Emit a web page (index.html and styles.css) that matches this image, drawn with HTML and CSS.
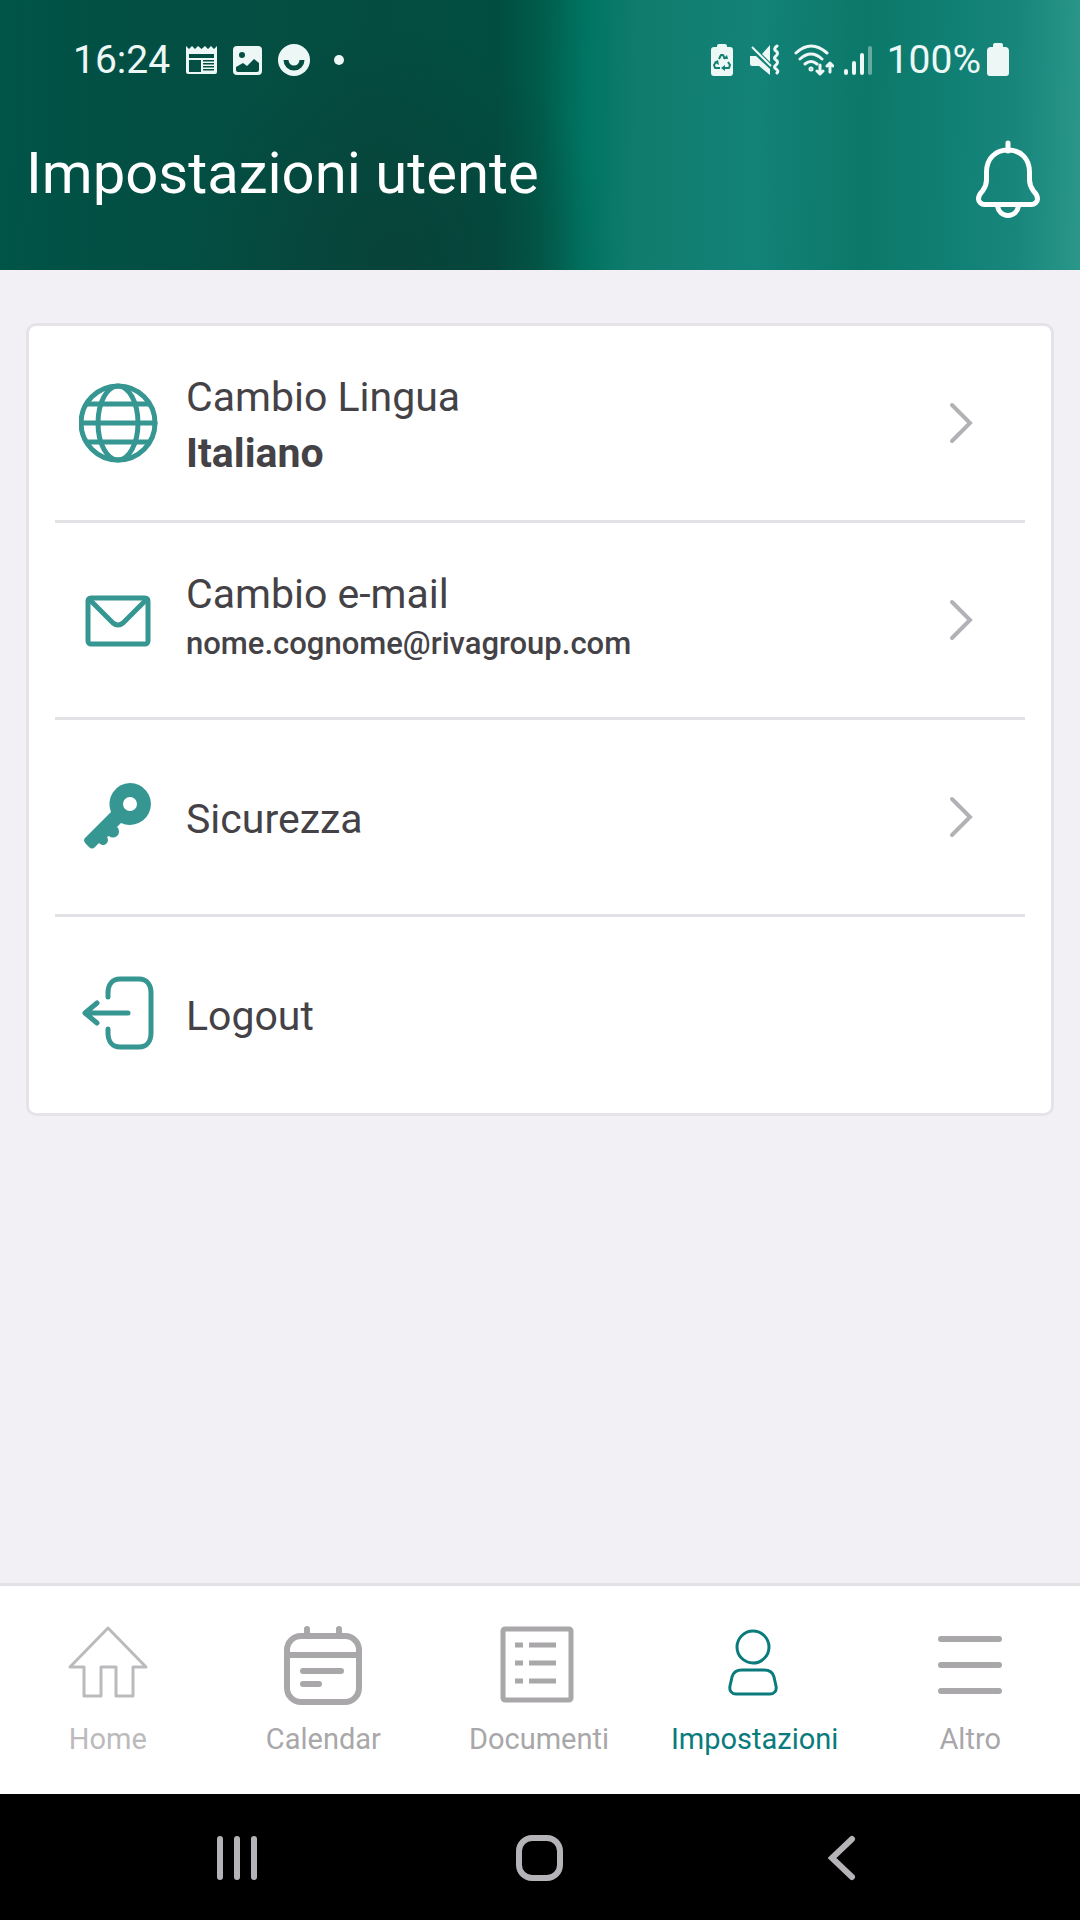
FILE: index.html
```html
<!DOCTYPE html>
<html lang="it">
<head>
    <meta charset="UTF-8">
    <meta name="viewport" content="width=device-width, initial-scale=1.0">
    <title>Impostazioni utente</title>
    <link rel="stylesheet" href="styles.css">
</head>
<body>
    <header class="header">
        <div class="status-bar">
            <div class="status-left">
                <span>16:24</span>
                <!-- news -->
                <svg width="31" height="32" viewBox="0 0 31 32" fill="currentColor">
                    <path fill-rule="evenodd" d="M0 2l3 3 3-3 3 3 3-3 3.500 3 3.500-3 3 3 3-3 3 3 3-3v26a2 2 0 0 1-2 2H2a2 2 0 0 1-2-2zM3 10v4h25v-4zM3 16v12h12V16zM17 16v1.500h11V16zM17 19v1.500h11V19zM17 22v1.500h11V22zM17 25v1.500h11V25z"/>
                </svg>
                <!-- gallery -->
                <svg width="29" height="32" viewBox="0 0 29 32" fill="currentColor">
                    <path fill-rule="evenodd" d="M4 2h21a4 4 0 0 1 4 4v21a4 4 0 0 1-4 4H4a4 4 0 0 1-4-4V6a4 4 0 0 1 4-4zM9 8a3 3 0 1 0 0 6 3 3 0 0 0 0-6zM3 23v3a2 2 0 0 0 2 2h19a2 2 0 0 0 2-2v-7l-5-4-7 7-4-3z"/>
                </svg>
                <!-- smile -->
                <svg width="33" height="32" viewBox="0 0 33 32">
                    <circle cx="16" cy="16" r="16" fill="currentColor"/>
                    <path d="M8 16a8 8 0 0 0 16 0" fill="none" stroke="#044d41" stroke-width="5"/>
                </svg>
                <svg width="24" height="32" viewBox="0 0 24 32"><circle cx="12" cy="16" r="5" fill="currentColor"/></svg>
            </div>
            <div class="status-right">
                <!-- power saving -->
                <svg width="29" height="32" viewBox="0 0 29 32">
                    <path d="M6 3V2a2 2 0 0 1 2-2h6a2 2 0 0 1 2 2v1h3a3 3 0 0 1 3 3v23a3 3 0 0 1-3 3H3a3 3 0 0 1-3-3V6a3 3 0 0 1 3-3z" fill="currentColor"/>
                    <path d="M8 15l2-4h2l2 4M17 18l2 3-1 3h-5M9 24H4l-1-3 2-3" fill="none" stroke="#12806f" stroke-width="2" stroke-linejoin="round"/>
                    <path d="M12 15h5l-1-4zM14 21v6l-4-3zM3 18l4-2 1 5z" fill="#12806f"/>
                </svg>
                <!-- muted, vibrate -->
                <svg width="34" height="32" viewBox="0 0 34 32">
                    <path d="M0 12h6l14 13v6L9 22H2a2 2 0 0 1-2-2zM20 1v17l-8-8z" fill="currentColor"/>
                    <path d="M2 3l19 19" stroke="currentColor" stroke-width="2"/>
                    <path d="M27 2q-4 3-1 5t0 5q-3 2 0 4t0 5q-3 2 0 4t1 4" fill="none" stroke="currentColor" stroke-width="3" stroke-linecap="round" stroke-linejoin="round"/>
                </svg>
                <!-- wifi -->
                <svg width="40" height="32" viewBox="0 0 40 32" fill="none" stroke="currentColor" stroke-width="3" stroke-linecap="round" stroke-linejoin="round">
                    <path d="M2 9q15-14 31 0M6 15q11-10 22 0M11 20q6-5 12 0"/>
                    <circle cx="17" cy="25" r="1"/>
                    <path d="M26 21v9m-3-3l3 3 3-3M36 28v-9m-3 3l3-3 3 3"/>
                </svg>
                <!-- signal -->
                <svg width="33" height="32" viewBox="0 0 33 32" stroke="currentColor" stroke-width="4" stroke-linecap="round">
                    <path d="M2 27v2M10 19v10M18 11v18"/>
                    <path d="M26 4v25" opacity="0.400"/>
                </svg>
                <div class="battery">
                    <span>100%</span>
                    <svg width="22" height="34" viewBox="0 0 22 34" fill="currentColor">
                        <path d="M6 4V2a2 2 0 0 1 2-2h6a2 2 0 0 1 2 2v2h2a4 4 0 0 1 4 4v22a3 3 0 0 1-3 3H3a3 3 0 0 1-3-3V8a4 4 0 0 1 4-4z"/>
                    </svg>
                </div>
            </div>
        </div>
        <div class="title-bar">
            <h1>Impostazioni utente</h1>
            <button type="button" class="bell" aria-label="Notifiche">
                <svg width="64" height="78" viewBox="0 0 64 78" fill="none" stroke="currentColor" stroke-width="5" stroke-linecap="round" stroke-linejoin="round">
                    <path d="M32 3v8M32 10c-13 0-21.500 9-21.500 22v8c0 5-1 7-4 11-3 3-4 5-4 8 0 3 3 5.500 6 5.500h47c3 0 6-2.500 6-5.500 0-3-1-5-4-8-3-4-4-6-4-11v-8C53.500 19 45 10 32 10z"/>
                    <path d="M21.500 66c1 6 5 9.500 10.500 9.500S41.500 72 42.500 66"/>
                </svg>
            </button>
        </div>
    </header>

    <main class="content">
        <ul class="settings">
            <li>
                <a href="#lingua" class="setting">
                    <svg class="setting-icon" viewBox="0 0 80 80">
                        <circle cx="39" cy="40" r="37"/>
                        <ellipse cx="39" cy="40" rx="20" ry="37"/>
                        <path d="M8 21h62M2 40h74M8 59h62"/>
                    </svg>
                    <span class="setting-text">
                        <span class="label">Cambio Lingua</span>
                        <strong class="value">Italiano</strong>
                    </span>
                    <svg class="chevron" viewBox="0 0 24 42"><path d="M3 3l18 18L3 39"/></svg>
                </a>
            </li>
            <li>
                <a href="#email" class="setting">
                    <svg class="setting-icon" viewBox="0 0 80 80">
                        <rect x="9" y="18" width="60" height="46" rx="3"/>
                        <path d="M10 19l24 24q5 4 10 0l24-24"/>
                    </svg>
                    <span class="setting-text">
                        <span class="label">Cambio e-mail</span>
                        <span class="email">nome.cognome@rivagroup.com</span>
                    </span>
                    <svg class="chevron" viewBox="0 0 24 42"><path d="M3 3l18 18L3 39"/></svg>
                </a>
            </li>
            <li>
                <a href="#sicurezza" class="setting">
                    <svg class="setting-icon filled" viewBox="0 0 80 80">
                        <path fill-rule="evenodd" d="M51 6a21 21 0 1 1-9 40l-4 4a6 6 0 1 1-8 9l-2 1a5 5 0 1 1-8 6l-4 4q-3 3-6 0l-3-3q-4-4 0-7l25-25A21 21 0 0 1 51 6zM51 20a7 7 0 1 0 0 14 7 7 0 0 0 0-14z"/>
                    </svg>
                    <span class="setting-text">
                        <span class="label">Sicurezza</span>
                    </span>
                    <svg class="chevron" viewBox="0 0 24 42"><path d="M3 3l18 18L3 39"/></svg>
                </a>
            </li>
            <li>
                <button type="button" class="setting">
                    <svg class="setting-icon" viewBox="0 0 80 80">
                        <path d="M29 23v-4c0-8 4-14 12-14h19c8 0 12 6 12 14v40c0 8-4 14-12 14H41c-8 0-12-6-12-14v-4M49 39H6M18 29L6 39l12 10"/>
                    </svg>
                    <span class="setting-text">
                        <span class="label">Logout</span>
                    </span>
                </button>
            </li>
        </ul>
    </main>

    <nav class="tab-bar">
        <a href="#home" class="tab tab-light">
            <svg viewBox="0 0 80 80" stroke-width="3">
                <path d="M40 2L2 41h14v29h17V41h15v29h17V41h13z"/>
            </svg>
            Home
        </a>
        <a href="#calendar" class="tab">
            <svg viewBox="0 0 80 80" stroke-width="6">
                <rect x="4" y="10" width="72" height="66" rx="14"/>
                <path d="M4 29h72M24 3v6M56 3v6M20 45h38M20 58h16" stroke-linecap="round"/>
            </svg>
            Calendar
        </a>
        <a href="#documenti" class="tab">
            <svg viewBox="0 0 80 80" stroke-width="5">
                <rect x="4" y="3" width="68" height="71" rx="2"/>
                <path d="M16 19h8M30 19h27M16 37h8M30 37h27M16 55h8M30 55h27"/>
            </svg>
            Documenti
        </a>
        <a href="#impostazioni" class="tab tab-active">
            <svg viewBox="0 0 80 80" stroke-width="3">
                <circle cx="38" cy="21" r="16"/>
                <path d="M27 44h22c6 0 9 3 10 7l2 9c1 5-2 8-6 8H21c-4 0-7-3-6-8l2-9c1-4 4-7 10-7z"/>
            </svg>
            Impostazioni
        </a>
        <a href="#altro" class="tab">
            <svg viewBox="0 0 80 80" stroke-width="6">
                <path d="M11 13h58M11 39h58M11 65h58" stroke-linecap="round"/>
            </svg>
            Altro
        </a>
    </nav>

    <div class="system-bar">
        <button type="button" aria-label="Recenti">
            <svg viewBox="0 0 48 48"><path d="M6 6v38M23 6v38M40 6v38"/></svg>
        </button>
        <button type="button" aria-label="Home">
            <svg viewBox="0 0 48 48"><rect x="3" y="5" width="41" height="40" rx="13"/></svg>
        </button>
        <button type="button" aria-label="Indietro">
            <svg viewBox="0 0 48 48"><path d="M34 6L14 25l20 19"/></svg>
        </button>
    </div>
</body>
</html>
```
FILE: styles.css
```css
/* General Reset */
* {
    margin: 0;
    padding: 0;
    box-sizing: border-box;
    font-family: Roboto, "Liberation Sans", sans-serif;
}

body {
    background: #f2f0f5;
    color: #444246;
    min-height: 100vh;
    display: flex;
    flex-direction: column;
}

a {
    color: inherit;
    text-decoration: none;
}

button {
    background: none;
    border: none;
    color: inherit;
    cursor: pointer;
}

svg {
    display: block;
    flex-shrink: 0;
}

/* Header */
.header {
    color: #fff;
    padding-bottom: 52px;
    background:
        radial-gradient(ellipse 20% 90% at 37% 100%, rgba(10, 62, 54, 0.7), transparent),
        linear-gradient(91deg, #005548 0%, #034f44 12%, #044c40 35%, #014e41 46%, #005c4b 50%, #007562 54%, #107c6e 59%, #138277 70%, #0b7869 80%, #118074 88%, #18867b 94%, #2a978a 100%);
}

.status-bar {
    display: flex;
    justify-content: space-between;
    height: 120px;
    padding: 0 71px 0 73px;
    font-size: 39px;
    color: #edf8f6;
}

.status-left, .status-right, .battery {
    display: flex;
    align-items: center;
}

.status-left {
    gap: 16px;
}

.status-right {
    gap: 10px;
}

.battery {
    gap: 6px;
}

.title-bar {
    display: flex;
    justify-content: space-between;
    align-items: flex-start;
    padding: 20px 40px 0 26px;
}

h1 {
    font-size: 58px;
    font-weight: 400;
    line-height: 66px;
}

/* Settings card */
.content {
    flex: 1;
    padding: 53px 26px;
}

.settings {
    list-style: none;
    background: #fff;
    border: 3px solid #e5e3e7;
    border-radius: 10px;
    padding: 0 26px 2px;
}

.settings li + li {
    border-top: 3px solid #e3e1e5;
}

.setting {
    display: flex;
    align-items: center;
    gap: 27px;
    width: 100%;
    height: 194px;
    padding: 0 52px 0 24px;
    text-align: left;
}

.setting-icon {
    width: 80px;
    height: 80px;
    fill: none;
    stroke: #359692;
    stroke-width: 5;
    stroke-linecap: round;
    stroke-linejoin: round;
}

.setting-icon.filled {
    fill: #359692;
    stroke: none;
}

.setting-text {
    display: flex;
    flex-direction: column;
    flex: 1;
    padding-top: 4px;
}

.label, .value {
    font-size: 41px;
    line-height: 56px;
}

.value {
    font-weight: 700;
}

.email {
    font-size: 31px;
    font-weight: 500;
    line-height: 44px;
    padding-bottom: 12px;
}

.chevron {
    width: 24px;
    height: 42px;
    fill: none;
    stroke: #b3b1b5;
    stroke-width: 4;
    stroke-linecap: round;
}

/* Tab bar */
.tab-bar {
    display: grid;
    grid-template-columns: repeat(5, 1fr);
    background: #fff;
    border-top: 3px solid #e3e1e5;
    padding: 40px 2px 38px 0;
}

.tab {
    display: flex;
    flex-direction: column;
    align-items: center;
    gap: 16px;
    font-size: 29px;
    line-height: 34px;
    color: #a9a7aa;
}

.tab svg {
    width: 80px;
    height: 80px;
    fill: none;
    stroke: currentColor;
    stroke-linejoin: round;
}

.tab-light {
    color: #bcbabd;
}

.tab-active {
    color: #0a7b7c;
}

/* Android navigation */
.system-bar {
    display: grid;
    grid-template-columns: repeat(3, 28%);
    justify-content: center;
    background: #000;
    height: 126px;
}

.system-bar button {
    display: flex;
    align-items: center;
    justify-content: center;
}

.system-bar svg {
    width: 48px;
    height: 48px;
    fill: none;
    stroke: #b5b3b7;
    stroke-width: 6;
    stroke-linecap: round;
}
```
